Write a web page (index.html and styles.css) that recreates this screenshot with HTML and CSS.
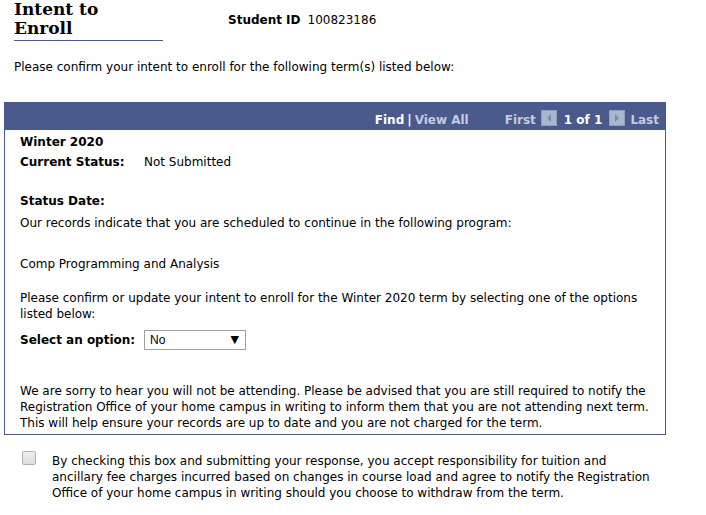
FILE: index.html
```html
<!DOCTYPE html>
<html>
<head>
<meta charset="utf-8">
<link rel="stylesheet" href="styles.css">
</head>
<body>
<div class="page">
  <div class="top">
    <h1 class="title">Intent to<br>Enroll</h1>
    <div class="sid"><span class="lbl">Student ID</span><span class="val">100823186</span></div>
  </div>
  <p class="intro">Please confirm your intent to enroll for the following term(s) listed below:</p>
  <div class="box">
    <div class="bar">
      <span class="find">Find</span><span class="sep">|</span><span class="link">View All</span>
      <span class="link first">First</span>
      <span class="arrow"><svg width="16" height="16" viewBox="0 0 16 16"><rect x="0" y="0" width="16" height="16" fill="#a9b6cc"/><rect x="0.5" y="0.5" width="15" height="15" fill="none" stroke="#8ea0bd"/><path d="M10 4 L6 8 L10 12 Z" fill="#7a8db0"/></svg></span>
      <span class="count">1 of 1</span>
      <span class="arrow"><svg width="16" height="16" viewBox="0 0 16 16"><rect x="0" y="0" width="16" height="16" fill="#a9b6cc"/><rect x="0.5" y="0.5" width="15" height="15" fill="none" stroke="#8ea0bd"/><path d="M6 4 L10 8 L6 12 Z" fill="#7a8db0"/></svg></span>
      <span class="link">Last</span>
    </div>
    <div class="content">
      <div class="term">Winter 2020</div>
      <div class="row"><span class="rlbl">Current Status:</span><span>Not Submitted</span></div>
      <div class="row gap"><span class="rlbl">Status Date:</span></div>
      <p class="t1">Our records indicate that you are scheduled to continue in the following program:</p>
      <p class="t2">Comp Programming and Analysis</p>
      <p class="t3">Please confirm or update your intent to enroll for the Winter 2020 term by selecting one of the options listed below:</p>
      <div class="sel-row"><span class="slbl">Select an option:</span><span class="select"><span>No</span><span class="tri">&#9660;</span></span></div>
      <p class="t4">We are sorry to hear you will not be attending. Please be advised that you are still required to notify the Registration Office of your home campus in writing to inform them that you are not attending next term. This will help ensure your records are up to date and you are not charged for the term.</p>
    </div>
  </div>
  <div class="agree">
    <span class="cb"></span>
    <p>By checking this box and submitting your response, you accept responsibility for tuition and<br>ancillary fee charges incurred based on changes in course load and agree to notify the Registration Office of your home campus in writing should you choose to withdraw from the term.</p>
  </div>
</div>
</body>
</html>
```

FILE: styles.css
```css
html, body { margin: 0; padding: 0; background: #fff; }
body { font-family: "DejaVu Sans", sans-serif; font-size: 12px; color: #000; }
.page { padding: 0 0 0 4px; width: 662px; }
.top { display: flex; align-items: flex-start; }
.title { margin: 0 0 0 10px; width: 149px; font-family: "DejaVu Serif", serif; font-weight: bold; font-size: 17px; line-height: 19px; color: #000; border-bottom: 1px solid #4a5a8c; padding-bottom: 2px; }
.sid { margin: 12px 0 0 65px; line-height: 16px; }
.sid .lbl { font-weight: bold; margin-right: 7px; }
.intro { margin: 18px 0 0 10px; line-height: 16px; }
.box { margin-top: 27px; border: 1px solid #4a5a8c; border-top: none; }
.bar { background: #4a5a8c; height: 28px; display: flex; align-items: flex-end; justify-content: flex-end; padding: 0 6px 2px 0; box-sizing: border-box; font-weight: bold; color: #fff; line-height: 16px; }
.bar .find { color: #fff; }
.bar .sep { color: #fff; margin: 0 3px; }
.bar .link { color: #c4cbde; }
.bar .first { margin-left: 36px; }
.arrow { display: inline-flex; margin: 0 5px 2px 5px; align-self: flex-end; }
.count { color: #fff; margin: 0 2px; }
.content { padding: 4px 8px 3px 15px; line-height: 16px; }
.term { font-weight: bold; margin-bottom: 4px; }
.row { display: flex; }
.rlbl { font-weight: bold; width: 124px; }
.row.gap { margin-top: 23px; }
.content p { margin: 0; }
.t1 { margin-top: 6px !important; }
.t2 { margin-top: 25px !important; }
.t3 { margin-top: 18px !important; }
.sel-row { display: flex; align-items: center; margin-top: 8px; }
.slbl { font-weight: bold; width: 124px; }
.select { width: 102px; height: 20px; border: 1px solid #a0a0a0; box-sizing: border-box; display: flex; align-items: center; justify-content: space-between; padding: 0 6px 0 5px; font-family: "Liberation Sans", sans-serif; font-size: 12px; }
.tri { font-size: 11px; font-family: "DejaVu Sans", sans-serif; }
.t4 { margin-top: 33px !important; }
.agree { display: flex; margin-top: 18px; padding-left: 18px; }
.cb { width: 12px; height: 12px; border: 1px solid #b0b0b0; border-radius: 2px; background: linear-gradient(#eee, #dcdcdc); margin-top: -2px; flex: none; }
.agree p { margin: 0 0 0 16px; line-height: 16px; width: 610px; }
```
